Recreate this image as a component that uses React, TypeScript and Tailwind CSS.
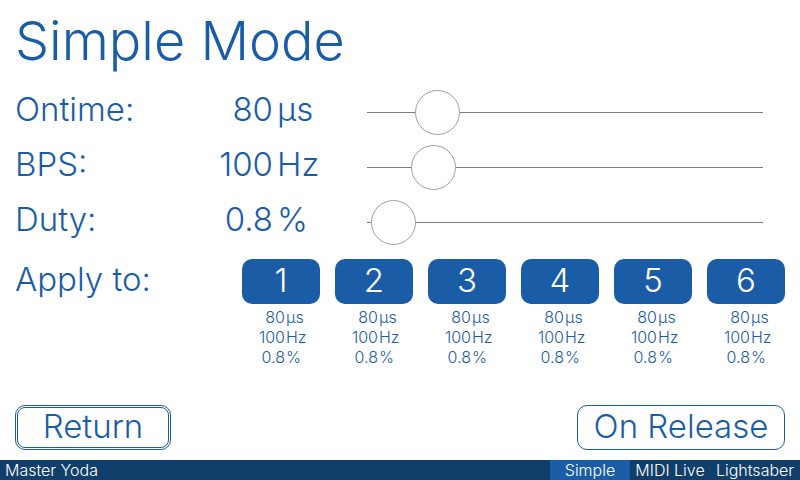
import { useState } from "react";

type Setting = { id: string; label: string; amount: string; unit: string; position: number };

const settings: Setting[] = [
  { id: "ontime", label: "Ontime:", amount: "80", unit: "µs", position: 137 },
  { id: "bps", label: "BPS:", amount: "100", unit: "Hz", position: 125 },
  { id: "duty", label: "Duty:", amount: "0.8", unit: "%", position: 11 },
];

const outputs = [1, 2, 3, 4, 5, 6];

function SettingRow({ setting }: { setting: Setting }) {
  const [position, setPosition] = useState(setting.position);
  return (
    <div className="flex h-[55px] items-center">
      <label htmlFor={setting.id} className="w-[160px] pb-2">
        {setting.label}
      </label>
      <div className="flex w-[192px] gap-1 pb-2">
        <span className="w-[98px] text-right">{setting.amount}</span>
        <span>{setting.unit}</span>
      </div>
      <input
        id={setting.id}
        type="range"
        min={0}
        max={1000}
        value={position}
        onChange={(e) => setPosition(Number(e.target.value))}
        className="mr-[22px] h-[45px] min-w-0 flex-1 appearance-none bg-transparent [&::-webkit-slider-runnable-track]:h-px [&::-webkit-slider-runnable-track]:bg-[#7b7b7b] [&::-webkit-slider-thumb]:-mt-[22px] [&::-webkit-slider-thumb]:size-[45px] [&::-webkit-slider-thumb]:appearance-none [&::-webkit-slider-thumb]:rounded-full [&::-webkit-slider-thumb]:border [&::-webkit-slider-thumb]:border-[#a0a0a0] [&::-webkit-slider-thumb]:bg-white"
      />
    </div>
  );
}

function OutputColumn({ output }: { output: number }) {
  return (
    <div className="w-[78px]">
      <button className="flex h-[45px] w-full items-center justify-center rounded-[10px] bg-[#1a5da6] pb-[3px] text-white">
        {output}
      </button>
      <div className="pt-[3px] text-[16px] leading-5">
        {settings.map((s) => (
          <div key={s.id} className="flex gap-px">
            <span className="w-[43px] text-right">{s.amount}</span>
            <span>{s.unit}</span>
          </div>
        ))}
      </div>
    </div>
  );
}

export default function App() {
  return (
    <div className="flex min-h-screen flex-col bg-white font-['Inter',sans-serif] text-[33px] leading-10 font-light text-[#1a5da6]">
      <main className="flex flex-1 flex-col px-[15px] pb-[10px]">
        <h1 className="h-[85px] pt-2 text-[54px] leading-[66px]">Simple Mode</h1>
        {settings.map((s) => (
          <SettingRow key={s.id} setting={s} />
        ))}
        <div className="flex justify-between pt-[9px]">
          <span>Apply to:</span>
          <div className="flex gap-[15px]">
            {outputs.map((o) => (
              <OutputColumn key={o} output={o} />
            ))}
          </div>
        </div>
        <div className="mt-auto flex justify-between">
          <button className="flex h-[45px] w-[156px] items-center justify-center rounded-[10px] border-3 border-double border-[#1a5da6] pb-[3px]">
            Return
          </button>
          <button className="flex h-[45px] w-[208px] items-center justify-center rounded-[10px] border border-[#1a5da6] pb-[3px]">
            On Release
          </button>
        </div>
      </main>
      <footer className="flex h-5 justify-between bg-[#113e6a] text-[16px] leading-5 text-white">
        <span className="pl-[5px]">Master Yoda</span>
        <nav className="flex">
          <button className="w-[80px] bg-[#1a5da6]">Simple</button>
          <button className="w-[80px]">MIDI Live</button>
          <button className="w-[90px]">Lightsaber</button>
        </nav>
      </footer>
    </div>
  );
}
